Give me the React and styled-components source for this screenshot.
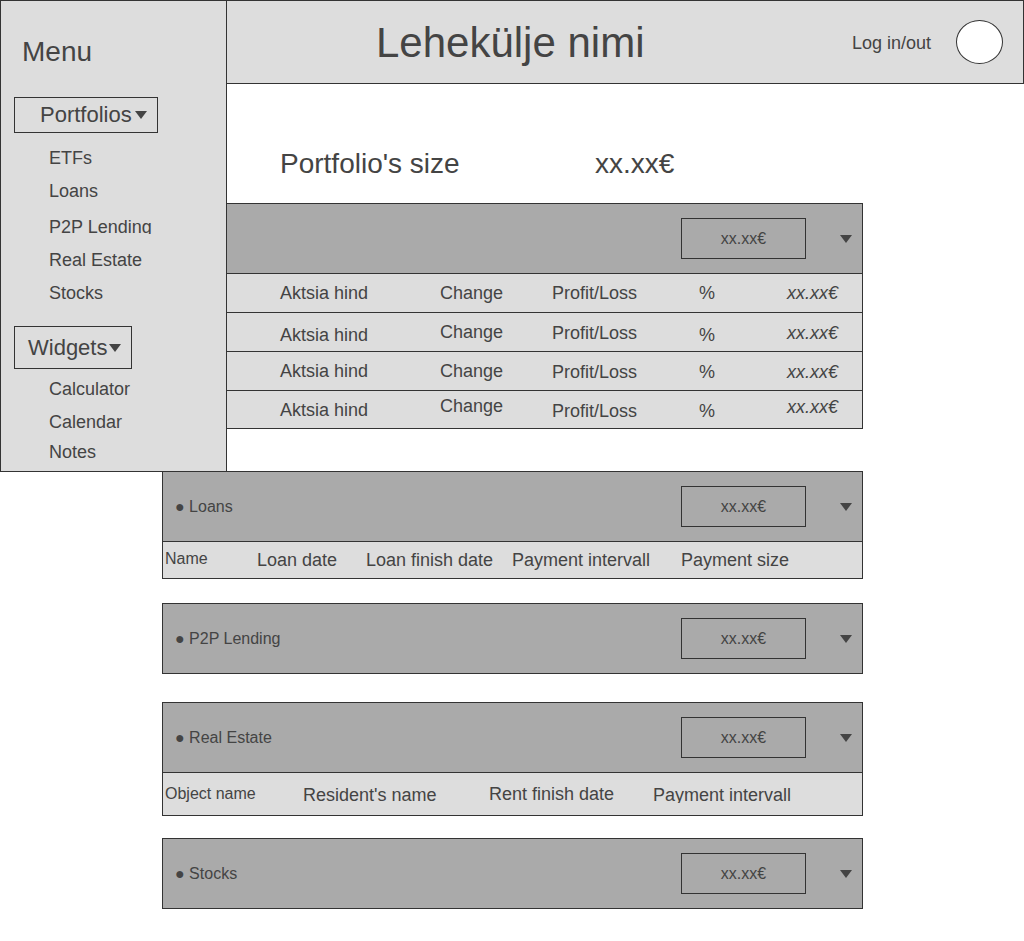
import React from 'react'
import styled, { createGlobalStyle } from 'styled-components'

const GlobalStyle = createGlobalStyle`
 body {
  margin: 0;
  background: #fff;
  font-family: "Liberation Sans", Arial, sans-serif;
  color: #444;
 }
 * { box-sizing: border-box; }
`

const etfRows = [
 [0, 0, 0, 0, 0],
 [3, 0, 1, 3, 1],
 [0, 0, 1, 1, 1],
 [1, -3, 2, 2, -2],
]

const App = () => {
 return (
  <Page>
   <GlobalStyle />
   <Sidebar>
    <MenuTitle>Menu</MenuTitle>
    <DropButton $w={144} $h={36} $pl={25} $mt={29}>
     Portfolios<Caret $ml={3} />
    </DropButton>
    <NavList $mt={9}>
     <NavItem>ETFs</NavItem>
     <NavItem>Loans</NavItem>
     <NavItem $clip>P2P Lending</NavItem>
     <NavItem>Real Estate</NavItem>
     <NavItem>Stocks</NavItem>
    </NavList>
    <DropButton $w={118} $h={43} $pl={13} $mt={16}>
     Widgets<Caret $ml={2} />
    </DropButton>
    <NavList $mt={4}>
     <NavItem>Calculator</NavItem>
     <NavItem $h={30}>Calendar</NavItem>
     <NavItem>Notes</NavItem>
    </NavList>
   </Sidebar>

   <TopBar>
    <PageTitle>Lehekülje nimi</PageTitle>
    <UserBox>
     <LoginText>Log in/out</LoginText>
     <Avatar />
    </UserBox>
   </TopBar>

   <Main>
    <SizeRow>
     <SizeLabel>Portfolio's size</SizeLabel>
     <span>xx.xx€</span>
    </SizeRow>

    <Panel $mt={23}>
     <PanelHead />
     {etfRows.map((d, i) => (
      <Row key={i} $h={i === 3 ? 37 : 38} $cols="160px 112px 147px 88px auto" $pl={117}>
       <Cell $dy={d[0]}>Aktsia hind</Cell>
       <Cell $dy={d[1]}>Change</Cell>
       <Cell $dy={d[2]}>Profit/Loss</Cell>
       <Cell $dy={d[3]}>%</Cell>
       <Cell $dy={d[4]} $italic>xx.xx€</Cell>
      </Row>
     ))}
    </Panel>

    <Panel $mt={42}>
     <PanelHead label="Loans" />
     <Row $h={36} $cols="92px 109px 146px 169px auto" $pl={2}>
      <Cell $small $dy={-1}>Name</Cell>
      <Cell>Loan date</Cell>
      <Cell>Loan finish date</Cell>
      <Cell>Payment intervall</Cell>
      <Cell>Payment size</Cell>
     </Row>
    </Panel>

    <Panel $mt={24}>
     <PanelHead label="P2P Lending" />
    </Panel>

    <Panel $mt={28}>
     <PanelHead label="Real Estate" />
     <Row $h={42} $cols="138px 186px 164px auto" $pl={2}>
      <Cell $small>Object name</Cell>
      <Cell $dy={1}>Resident's name</Cell>
      <Cell>Rent finish date</Cell>
      <Cell><Clip>Payment intervall</Clip></Cell>
     </Row>
    </Panel>

    <Panel $mt={22}>
     <PanelHead label="Stocks" />
    </Panel>
   </Main>
  </Page>
 )
}

const PanelHead = ({ label }) => (
 <Head>
  <HeadLabel>{label ? `● ${label}` : ''}</HeadLabel>
  <ValueBox>xx.xx€</ValueBox>
  <Caret $ml={34} $mr={10} />
 </Head>
)

export default App

const Page = styled.div`
 position: relative;
 width: 1024px;
 min-height: 941px;
 padding-bottom: 30px;
`

const Sidebar = styled.nav`
 position: absolute;
 top: 0;
 left: 0;
 z-index: 2;
 width: 227px;
 height: 472px;
 background: #ddd;
 border: 1px solid #333;
 padding-left: 13px;
`

const MenuTitle = styled.div`
 margin-top: 35px;
 margin-left: 8px;
 font-size: 28px;
 line-height: 32px;
`

const DropButton = styled.div`
 display: flex;
 align-items: center;
 width: ${(p) => p.$w}px;
 height: ${(p) => p.$h}px;
 margin-top: ${(p) => p.$mt}px;
 padding-left: ${(p) => p.$pl}px;
 border: 1px solid #333;
 font-size: 22px;
`

const Caret = styled.span`
 display: inline-block;
 width: 0;
 height: 0;
 margin-left: ${(p) => p.$ml || 0}px;
 margin-right: ${(p) => p.$mr || 0}px;
 border-left: 6px solid transparent;
 border-right: 6px solid transparent;
 border-top: 8px solid #444;
`

const NavList = styled.div`
 margin-top: ${(p) => p.$mt}px;
 padding-left: 35px;
`

const NavItem = styled.div`
 height: ${(p) => (p.$clip ? 23 : p.$h || 33)}px;
 margin-top: ${(p) => (p.$clip ? 3 : 0)}px;
 margin-bottom: ${(p) => (p.$clip ? 10 : 0)}px;
 padding-top: 6px;
 overflow: hidden;
 font-size: 18px;
 line-height: 21px;
`

const TopBar = styled.header`
 display: flex;
 align-items: center;
 margin-left: 226px;
 width: 798px;
 height: 84px;
 background: #ddd;
 border: 1px solid #333;
 padding-right: 20px;
`

const PageTitle = styled.h1`
 margin: 2px 0 0 149px;
 font-size: 42px;
 font-weight: normal;
`

const UserBox = styled.div`
 display: flex;
 align-items: center;
 gap: 25px;
 margin-left: auto;
`

const LoginText = styled.span`
 margin-top: 2px;
 font-size: 18px;
`

const Avatar = styled.div`
 width: 47px;
 height: 44px;
 border-radius: 50%;
 background: #fff;
 border: 1px solid #333;
`

const Main = styled.main`
 margin-left: 162px;
 width: 701px;
`

const SizeRow = styled.div`
 display: grid;
 grid-template-columns: 315px auto;
 margin-top: 64px;
 padding-left: 118px;
 font-size: 28px;
 line-height: 32px;
`

const SizeLabel = styled.span``

const Panel = styled.section`
 margin-top: ${(p) => p.$mt}px;
 border: 1px solid #333;
 background: #ddd;
`

const Head = styled.div`
 display: flex;
 align-items: center;
 height: 69px;
 background: #aaa;
 padding-left: 12px;
`

const HeadLabel = styled.span`
 flex: 1;
 font-size: 16px;
`

const ValueBox = styled.div`
 display: flex;
 align-items: center;
 justify-content: center;
 width: 125px;
 height: 41px;
 border: 1px solid #333;
 font-size: 16px;
`

const Row = styled.div`
 display: grid;
 grid-template-columns: ${(p) => p.$cols};
 align-items: center;
 height: ${(p) => p.$h + 1}px;
 padding-left: ${(p) => p.$pl}px;
 border-top: 1px solid #333;
 font-size: 18px;
`

const Cell = styled.span`
 font-size: ${(p) => (p.$small ? 16 : 18)}px;
 font-style: ${(p) => (p.$italic ? 'italic' : 'normal')};
 transform: translateY(${(p) => p.$dy || 0}px);
 white-space: nowrap;
`

const Clip = styled.span`
 display: block;
 height: 18px;
 line-height: 21px;
 overflow: hidden;
`
